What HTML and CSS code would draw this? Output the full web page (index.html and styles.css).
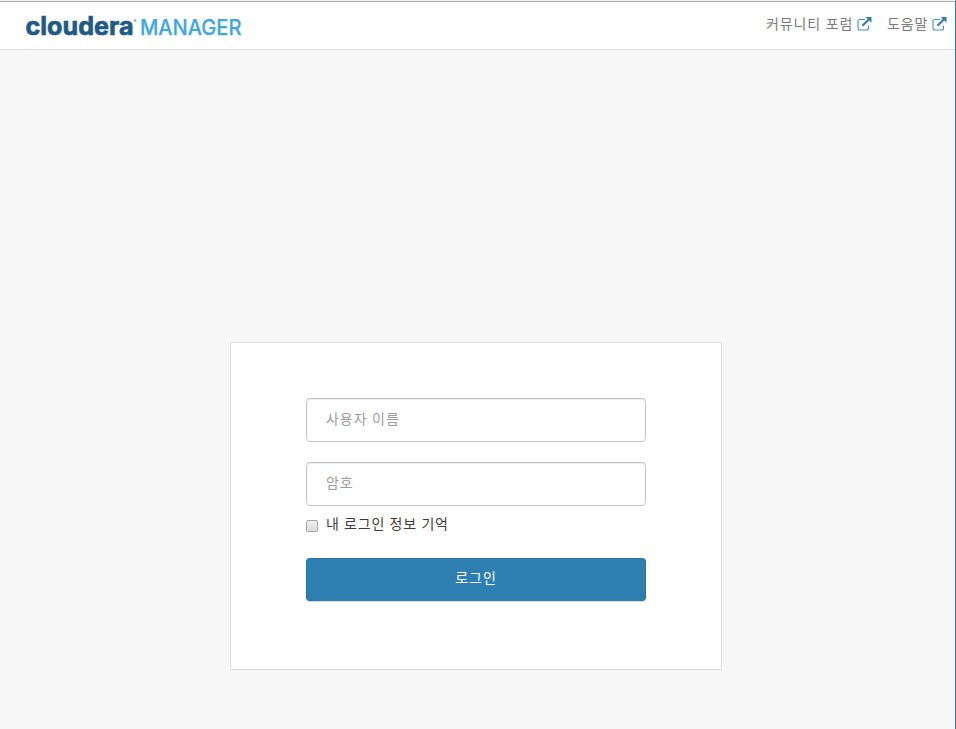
FILE: index.html
```html
<!DOCTYPE html>
<html lang="ko">
<head>
<meta charset="utf-8">
<title>Cloudera Manager</title>
<link rel="stylesheet" href="styles.css">
</head>
<body>
<header class="navbar">
  <svg class="logo" width="222" height="44" viewBox="0 0 222 44" role="img" aria-label="cloudera MANAGER">
    <text class="logo-brand" x="3.500" y="32.500" textLength="108" lengthAdjust="spacingAndGlyphs">cloudera</text>
    <circle class="logo-mark" cx="113.200" cy="18.500" r="1.300"/>
    <text class="logo-product" x="118" y="33" textLength="101.500" lengthAdjust="spacingAndGlyphs">MANAGER</text>
  </svg>
  <nav class="links">
    <a class="link" href="#"><span class="link-text forum">커뮤니티 포럼</span><svg class="external" viewBox="0 0 15 14"><path class="box" d="M8 2.500H3Q1 2.500 1 4.500V11Q1 13 3 13H9.500Q11.500 13 11.500 11V8.500"/><path class="shaft" d="M5.500 8.700L12 2.200"/><path class="head" d="M8.700 0H14.500V5.800Z"/></svg></a>
    <a class="link" href="#"><span class="link-text help">도움말</span><svg class="external" viewBox="0 0 15 14"><path class="box" d="M8 2.500H3Q1 2.500 1 4.500V11Q1 13 3 13H9.500Q11.500 13 11.500 11V8.500"/><path class="shaft" d="M5.500 8.700L12 2.200"/><path class="head" d="M8.700 0H14.500V5.800Z"/></svg></a>
  </nav>
</header>
<main class="page">
  <form class="login">
    <input class="field" type="text" placeholder="사용자 이름">
    <input class="field" type="password" placeholder="암호">
    <label class="remember"><input class="check" type="checkbox"><span class="remember-text">내 로그인 정보 기억</span></label>
    <button class="submit" type="button">로그인</button>
  </form>
</main>
</body>
</html>
```
FILE: styles.css
```css
* { box-sizing: border-box; }
html { height: 100%; }
body {
  margin: 0;
  height: 100%;
  display: flex;
  flex-direction: column;
  overflow: hidden;
  border-top: 1px solid #f2f2f2;
  border-right: 1px solid #2a7abf;
  background: #f7f7f7;
  font-family: "Open Sans", "Noto Sans CJK KR", sans-serif;
  font-size: 14px;
}
.navbar {
  flex: none;
  height: 49px;
  display: flex;
  justify-content: space-between;
  padding: 0 8px 0 22px;
  background: #fff;
  border-top: 1px solid #b0b0b0;
  border-bottom: 1px solid #ddd;
}
.logo { display: block; overflow: visible; }
.logo-brand {
  font: 700 25px Inter, sans-serif;
  fill: #1f5b85;
  stroke: #1f5b85;
  stroke-width: 0.7;
}
.logo-mark { fill: #8fabc0; }
.logo-product {
  font: 500 21px Inter, sans-serif;
  fill: #3ea8e2;
  stroke: #3ea8e2;
  stroke-width: 0.25;
}
.links { display: flex; gap: 15px; height: 28px; margin-top: 8px; }
.link {
  display: flex;
  align-items: center;
  gap: 2px;
  color: #7b7b7b;
  line-height: 28px;
  text-decoration: none;
}
.link-text { white-space: nowrap; }
.forum { width: 89px; letter-spacing: 0.9px; }
.help { width: 43px; letter-spacing: 0.9px; }
.external { width: 15px; height: 14px; }
.box { fill: none; stroke: #4a91bd; stroke-width: 1.1; }
.shaft { fill: none; stroke: #2c7fb0; stroke-width: 2.2; }
.head { fill: #2c7fb0; }
.page { display: flex; justify-content: center; padding-top: 292px; padding-right: 3px; }
.login {
  width: 492px;
  height: 328px;
  padding: 55px 75px 0;
  background: #fff;
  border: 1px solid #ddd;
}
.field {
  display: block;
  width: 340px;
  height: 44px;
  margin: 0 0 20px;
  padding: 0 20px 4px 19px;
  border: 1px solid #c3c3c3;
  border-radius: 4px;
  box-shadow: inset 0 1px 1px rgba(0, 0, 0, 0.075);
  font: inherit;
  letter-spacing: 0.95px;
  background: #fff;
}
.field::placeholder { color: #9c9c9c; opacity: 1; }
.remember {
  display: flex;
  align-items: center;
  height: 20px;
  margin-top: -11px;
  color: #3c3c3c;
}
.check {
  appearance: none;
  width: 12px;
  height: 12px;
  margin: 2px 8px 0 0;
  border: 1px solid #a6a6a6;
  border-radius: 2px;
  background: linear-gradient(#eee, #dcdcdc);
}
.remember-text { letter-spacing: 0.8px; white-space: nowrap; padding-bottom: 4px; }
.submit {
  display: block;
  width: 340px;
  height: 43px;
  margin-top: 23px;
  padding: 0 0 5px;
  border: 1px solid #2874a2;
  border-bottom-color: #2c7fb0;
  border-radius: 4px;
  box-shadow: 0 1px 0 rgba(0, 0, 0, 0.15);
  background: #2c7fb0;
  color: #fff;
  font: inherit;
  letter-spacing: 0.95px;
}
```
